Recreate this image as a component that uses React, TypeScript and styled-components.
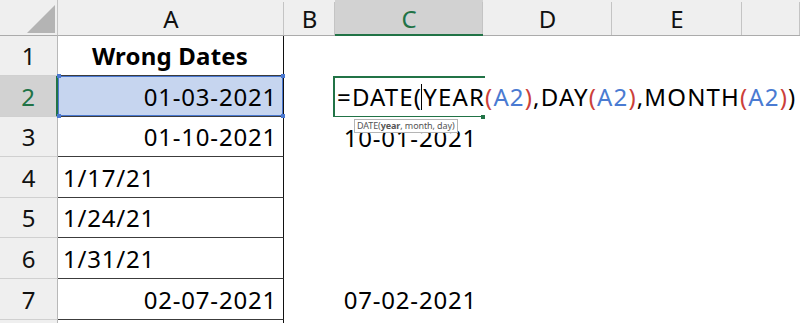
import React from 'react';
import styled, { createGlobalStyle, css } from 'styled-components';

const GlobalStyle = createGlobalStyle`
  html, body {
    margin: 0;
    padding: 0;
    background: #fff;
    overflow: hidden;
  }
  body {
    font-family: "Noto Sans", "Open Sans", sans-serif;
  }
`;

const GREEN = '#217346';
const HEAD_BG = '#efefef';
const HEAD_ACTIVE = '#d2d2d2';

const Sheet = styled.div`
  display: grid;
  grid-template-columns: 58px 226px 51px 148px 129px 130px 1fr;
  grid-template-rows: 36px 40px 41px 40px 41px 40px 41px 41px 40px;
  width: 800px;
  height: 323px;
  overflow: hidden;
  font-size: 24px;
  color: #000;
`;

const Corner = styled.div`
  background: ${HEAD_BG};
  border-right: 1px solid #c4c4c4;
  border-bottom: 1px solid #ababab;
  display: flex;
  align-items: flex-end;
  justify-content: flex-end;
  padding: 0 2px 2px 0;

  svg {
    display: block;
  }
`;

const ColHead = styled.div<{ $active?: boolean }>`
  background: ${(p) => (p.$active ? HEAD_ACTIVE : HEAD_BG)};
  border-bottom: ${(p) => (p.$active ? `2px solid ${GREEN}` : '1px solid #ababab')};
  color: ${(p) => (p.$active ? GREEN : '#111')};
  display: flex;
  align-items: center;
  justify-content: center;
  position: relative;
  padding-top: 2px;

  &::after {
    content: '';
    position: absolute;
    right: 0;
    top: 2px;
    bottom: 0;
    border-right: 1px solid #c4c4c4;
  }
`;

const RowHead = styled.div<{ $active?: boolean }>`
  background: ${(p) => (p.$active ? HEAD_ACTIVE : HEAD_BG)};
  color: ${(p) => (p.$active ? GREEN : '#111')};
  border-right: ${(p) => (p.$active ? `2px solid ${GREEN}` : '1px solid #b8b8b8')};
  border-bottom: 1px solid #d0d0d0;
  display: flex;
  align-items: center;
  justify-content: center;
`;

const Cell = styled.div<{ $boxed?: boolean; $right?: boolean; $selected?: boolean }>`
  display: flex;
  align-items: center;
  justify-content: ${(p) => (p.$right ? 'flex-end' : 'flex-start')};
  padding: 0 6px 0 5px;
  white-space: nowrap;
  position: relative;
  background: #fff;
  letter-spacing: 0.8px;

  ${(p) =>
    p.$boxed &&
    css`
      border-right: 1px solid #111;
      border-bottom: 1px solid #3c3c3c;
    `}

  ${(p) =>
    p.$selected &&
    css`
      background: #c6d5ef;
      box-shadow: inset 0 0 0 1px #4a78d0;
    `}
`;

const Title = styled.span`
  font-weight: 700;
  margin: 0 auto;
  letter-spacing: 0.2px;
`;

const Bold = styled.span`
  font-weight: 700;
`;

const Handle = styled.span<{ $x: 'left' | 'right'; $y: 'top' | 'bottom'; $color?: string }>`
  position: absolute;
  width: 4px;
  height: 4px;
  background: ${(p) => p.$color || '#4a78d0'};
  ${(p) => (p.$x === 'left' ? 'left: -1px;' : 'right: -2px;')}
  ${(p) => (p.$y === 'top' ? 'top: -2px;' : 'bottom: -2px;')}
  z-index: 3;
`;

const EditCell = styled.div`
  position: relative;
  background: #fff;
  z-index: 2;
`;

const EditBox = styled.div`
  position: absolute;
  left: -2px;
  top: 0;
  width: 150px;
  bottom: 0;
  border: solid ${GREEN};
  border-width: 2px 0 1px 2px;
`;

const FormulaText = styled.div`
  position: absolute;
  left: 2px;
  top: 0;
  bottom: 0;
  display: flex;
  align-items: center;
  white-space: nowrap;
  letter-spacing: 1.15px;
  z-index: 2;
`;

const Ref = styled.span`
  color: #4a7bd2;
`;

const Paren = styled.span`
  color: #cc3f3a;
`;

const Caret = styled.span`
  display: inline-block;
  width: 1px;
  height: 26px;
  background: #000;
  margin: 0 1px 0 -1px;
`;

const Tooltip = styled.div`
  position: absolute;
  left: 19px;
  top: 43px;
  padding: 0 2px;
  height: 12px;
  line-height: 11px;
  font-size: 9px;
  letter-spacing: -0.1px;
  color: #555;
  background: #fff;
  border: 1px solid #b5b5b5;
  white-space: nowrap;
  z-index: 4;
`;

const Blank = styled.div`
  background: #fff;
`;

const colLetters = ['A', 'B', 'C', 'D', 'E', ''];

interface RowData {
  a: string;
  aRight?: boolean;
  aBold?: boolean;
  c?: string;
}

const rows: RowData[] = [
  { a: 'Wrong Dates', aBold: true },
  { a: '01-03-2021', aRight: true },
  { a: '01-10-2021', aRight: true, c: '10-01-2021' },
  { a: '1/17/21' },
  { a: '1/24/21' },
  { a: '1/31/21' },
  { a: '02-07-2021', aRight: true, c: '07-02-2021' },
  { a: '' },
];

const Formula = () => (
  <FormulaText>
    =DATE(
    <Caret />
    YEAR<Paren>(</Paren>
    <Ref>A2</Ref>
    <Paren>)</Paren>,DAY<Paren>(</Paren>
    <Ref>A2</Ref>
    <Paren>)</Paren>,MONTH<Paren>(</Paren>
    <Ref>A2</Ref>
    <Paren>)</Paren>)
  </FormulaText>
);

const App: React.FC = () => {
  return (
    <>
      <GlobalStyle />
      <Sheet>
        <Corner>
          <svg width="28" height="28" viewBox="0 0 28 28">
            <polygon points="0,28 28,28 28,0" fill="#b4b4b4" />
          </svg>
        </Corner>
        {colLetters.map((l, i) => (
          <ColHead key={i} $active={l === 'C'}>
            {l}
          </ColHead>
        ))}

        {rows.map((r, i) => {
          const n = i + 1;
          return (
            <React.Fragment key={n}>
              {/* row 8 is only a sliver at the bottom edge, its number is not visible */}
              <RowHead $active={n === 2}>{n < 8 ? n : ''}</RowHead>
              <Cell $boxed $right={r.aRight} $selected={n === 2}>
                {r.aBold ? <Title>{r.a}</Title> : r.a}
                {n === 2 && (
                  <>
                    <Handle $x="left" $y="top" />
                    <Handle $x="right" $y="top" />
                    <Handle $x="left" $y="bottom" />
                    <Handle $x="right" $y="bottom" />
                  </>
                )}
              </Cell>
              <Blank />
              {n === 2 ? (
                <EditCell>
                  <EditBox />
                  <Handle $x="right" $y="bottom" $color={GREEN} />
                  <Formula />
                  <Tooltip>
                    DATE(<Bold>year</Bold>, month, day)
                  </Tooltip>
                </EditCell>
              ) : (
                <Cell $right>{r.c || ''}</Cell>
              )}
              <Blank />
              <Blank />
              <Blank />
            </React.Fragment>
          );
        })}
      </Sheet>
    </>
  );
};

export default App;
